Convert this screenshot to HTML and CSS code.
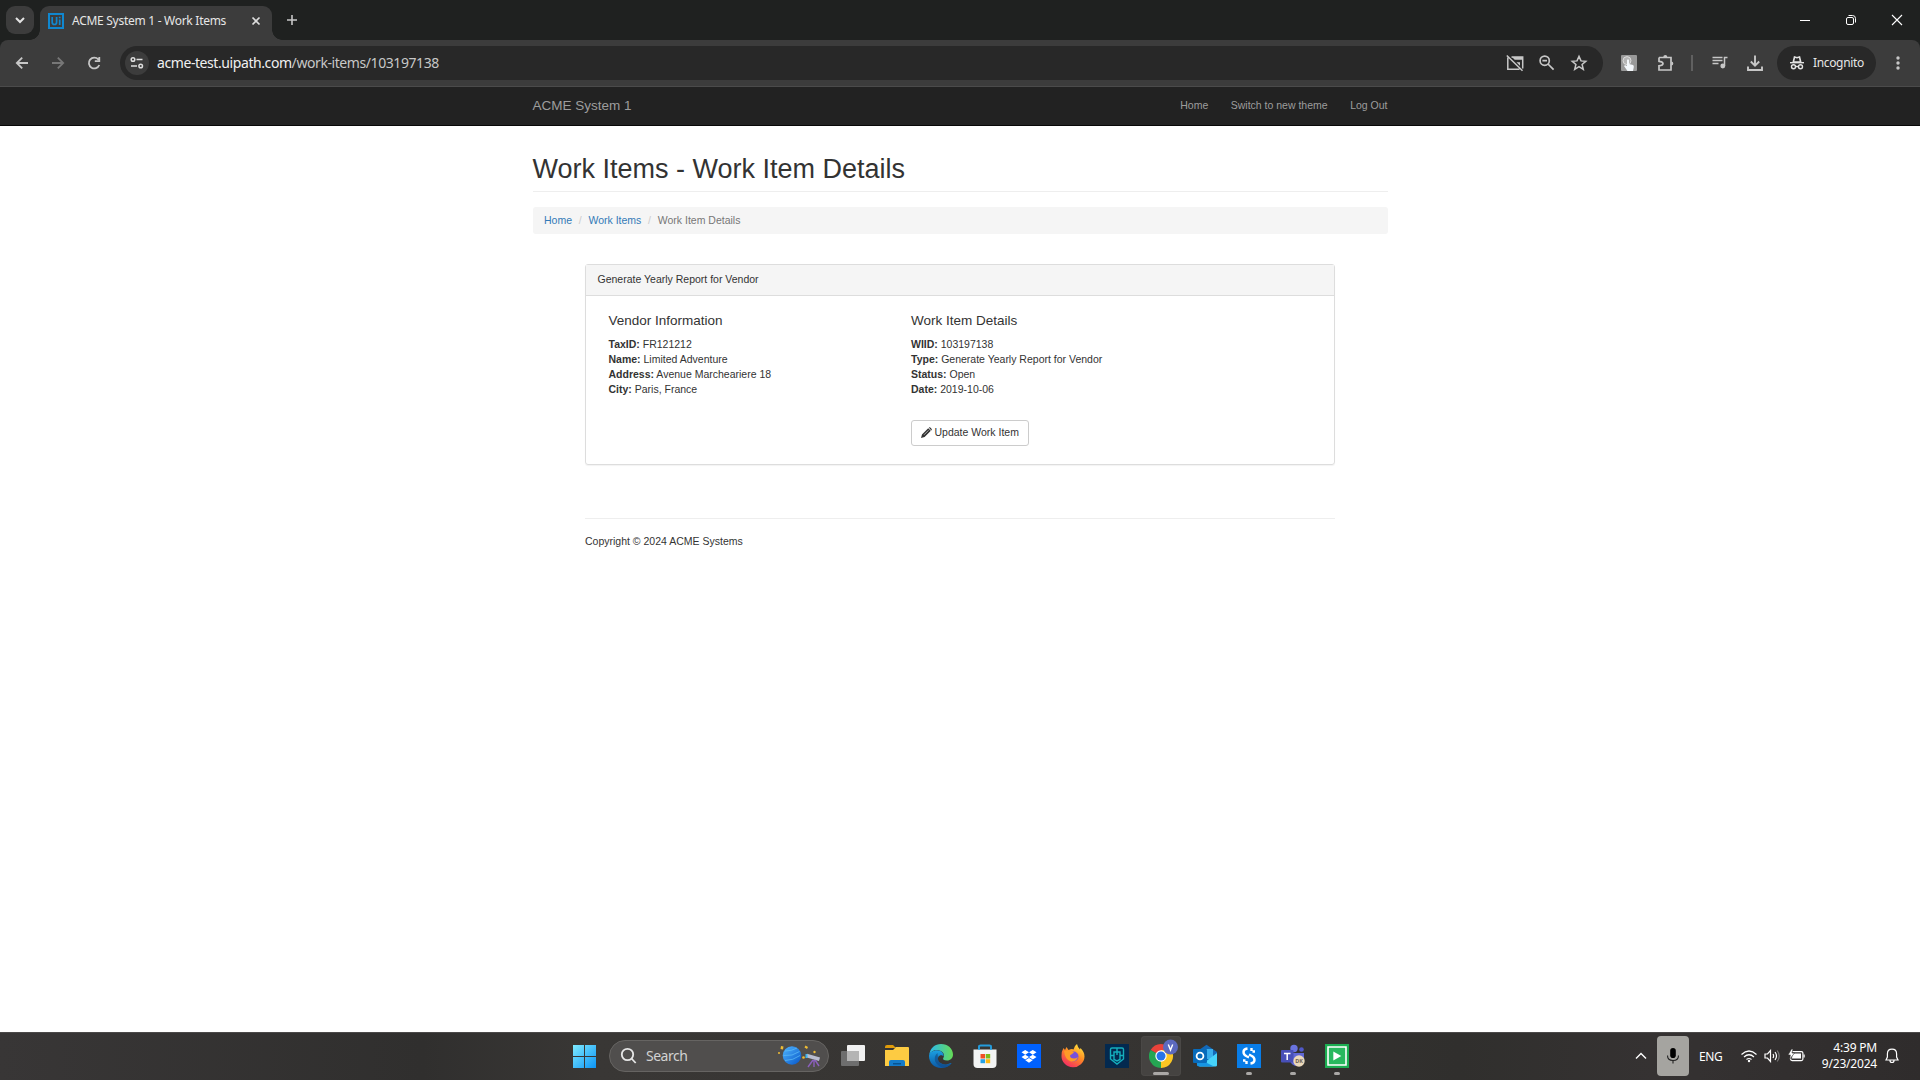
FILE: index.html
```html
<!DOCTYPE html>
<html lang="en">
<head>
<meta charset="utf-8">
<title>ACME System 1 - Work Items</title>
<link rel="stylesheet" href="styles.css">
</head>
<body>
<header class="tabstrip">
  <button class="tab-search"><svg width="28" height="28" fill="none" stroke="#e3e3e3" stroke-width="2"><path d="M10 12l4 4 4-4"/></svg></button>
  <div class="tab">
    <svg class="favicon" width="16" height="16" fill="none" stroke="#1087cf"><path d="M1 1h14v14H1z" stroke-width="2"/><path d="M4.2 4v5.2q0 2.300 2.200 2.300t2.200-2.300V4M11.700 6.500V12M11.700 3.800v1.500" stroke-width="1.700"/></svg>
    <span class="tab-title">ACME System 1 - Work Items</span>
    <svg class="tab-close" width="16" height="16" stroke="#dedede" stroke-width="1.700"><path d="M4.500 4.500l7 7M11.500 4.500l-7 7"/></svg>
  </div>
  <svg class="new-tab" width="12" height="12" stroke="#c7c7c7" stroke-width="1.600"><path d="M6 1v10M1 6h10"/></svg>
  <div class="window-controls">
    <svg width="46" height="40" stroke="#fff" stroke-width="1"><path d="M18 20.500h10"/></svg>
    <svg width="46" height="40" fill="none" stroke="#fff" stroke-width="1"><rect x="18.500" y="17.500" width="7" height="7" rx="1.500"/><path d="M20.500 15.500h4q3 0 3 3v4"/></svg>
    <svg width="46" height="40" stroke="#fff" stroke-width="1.100"><path d="M18 15l10 10M28 15L18 25"/></svg>
  </div>
</header>
<div class="toolbar-wrap">
<nav class="toolbar">
  <svg width="36" height="36" fill="none" stroke="#c7c7c7" stroke-width="1.800"><path d="M24 18H13M18.200 12.600L12.800 18l5.400 5.400"/></svg>
  <svg width="36" height="36" fill="none" stroke="#777" stroke-width="1.800"><path d="M12 18h11M17.800 12.600l5.400 5.400-5.400 5.400"/></svg>
  <svg width="36" height="36" fill="none" stroke="#c7c7c7" stroke-width="1.800"><path d="M22.300 14.400A5.400 5.400 0 1 0 23.300 20M23.300 12v4.200h-4.500"/></svg>
  <div class="omnibox">
    <span class="site-info"><svg width="24" height="24" fill="none" stroke="#dedede" stroke-width="1.500"><circle cx="8" cy="8.500" r="1.800"/><path d="M11.500 8.500h6M6 15h6"/><circle cx="15.700" cy="15" r="1.800"/></svg></span>
    <span class="url">acme-test.uipath.com<span class="url-path">/work-items/103197138</span></span>
    <span class="omni-icons">
      <svg width="20" height="20" fill="none" stroke="#c7c7c7" stroke-width="1.500"><path d="M6.500 4h11.200v11.500M14.500 16.200H2.800V4.500M1.800 2.500l15.700 15.200"/><path d="M7 4h10.500v2.800H9.700zM11.500 9.300H15v3.500z" fill="#c7c7c7" stroke="none"/></svg>
      <svg width="20" height="20" fill="none" stroke="#c7c7c7" stroke-width="1.700"><circle cx="7.700" cy="7.700" r="4.600"/><path d="M11 11l5.600 5.600M5.400 7.700H10"/></svg>
      <svg width="20" height="20" fill="none" stroke="#c7c7c7" stroke-width="1.500"><path d="M10 3.400l2 4.500 4.800.4-3.700 3.200 1.200 4.800-4.300-2.600-4.300 2.600 1.200-4.800-3.700-3.200 4.800-.4z"/></svg>
    </span>
  </div>
  <svg class="ext-icon" width="16" height="16"><rect width="16" height="16" rx="1" fill="#999"/><circle cx="6" cy="5.600" r="4" fill="#b4b4b4" stroke="#ddd"/><path d="M6 5q1-1.500 2 0v4l4 1q1 .4.800 2L12 16H6.500L3 11q1-1.500 3 0z" fill="#f3f7fb"/></svg>
  <svg class="puzzle-icon" width="20" height="20" fill="none" stroke="#c7c7c7" stroke-width="1.700"><path d="M3 4.500h12v4M15 13v4H3v-4.200q4-.2 4-2.200T3 8.300V4.500M15 8v5"/><path d="M7.300 4a2 2 0 0 1 4 0zM15.300 8.500a2 2 0 0 1 0 4z" fill="#c7c7c7" stroke="none"/></svg>
  <span class="divider"></span>
  <svg class="music-icon" width="18" height="18" fill="none" stroke="#c7c7c7" stroke-width="1.500"><path d="M1.500 3.500h10M1.500 6.500h10M1.500 9.500h6M13.500 12V3.500H16.500"/><circle cx="11.800" cy="12" r="1.700" fill="#c7c7c7"/></svg>
  <svg class="download-icon" width="18" height="18" fill="none" stroke="#c7c7c7" stroke-width="1.900"><path d="M9 1.500v9.500M4.800 7.500L9 11.700l4.200-4.200M2 12.500V16h14v-3.500"/></svg>
  <div class="incognito">
    <svg width="16" height="16" fill="none" stroke="#e3e3e3" stroke-width="1.400"><path d="M1 7.700h14"/><path d="M4.300 7L5.500 2l2.500.7 2.500-.7 1.200 5z" stroke-width="1.600"/><circle cx="4.500" cy="11.700" r="2"/><circle cx="11.500" cy="11.700" r="2"/><path d="M6.500 11.500h3"/></svg>
    <span class="incognito-label">Incognito</span>
  </div>
  <svg class="menu-icon" width="6" height="18" fill="#c7c7c7"><circle cx="3" cy="4" r="1.700"/><circle cx="3" cy="9" r="1.700"/><circle cx="3" cy="14" r="1.700"/></svg>
</nav>
</div>

<main class="page">
  <nav class="navbar">
    <div class="container navbar-inner">
      <a class="brand">ACME System 1</a>
      <div class="nav-links"><a>Home</a><a>Switch to new theme</a><a>Log Out</a></div>
    </div>
  </nav>
  <div class="container">
    <h1 class="page-header">Work Items - Work Item Details</h1>
    <ol class="breadcrumb"><li><a>Home</a></li><li><a>Work Items</a></li><li class="current">Work Item Details</li></ol>
    <div class="content">
      <section class="panel">
        <div class="panel-heading">Generate Yearly Report for Vendor</div>
        <div class="panel-body">
          <div class="col">
            <h4>Vendor Information</h4>
            <p><b>TaxID:</b> FR121212<br><b>Name:</b> Limited Adventure<br><b>Address:</b> Avenue Marcheariere 18<br><b>City:</b> Paris, France</p>
          </div>
          <div class="col">
            <h4>Work Item Details</h4>
            <p><b>WIID:</b> 103197138<br><b>Type:</b> Generate Yearly Report for Vendor<br><b>Status:</b> Open<br><b>Date:</b> 2019-10-06</p>
            <button class="btn"><svg width="11" height="11" fill="#333"><path d="M0 11l1-3.600L7.200 1.200l2.600 2.600L3.600 10zM7.800.6Q8.500-.2 9.300.5l1.200 1.200q.7.800 0 1.500l-.2.200z"/><path d="M3 7.800l4.500-4.500" stroke="#fff" stroke-width=".6"/></svg>Update Work Item</button>
          </div>
        </div>
      </section>
      <footer class="footer">Copyright © 2024 ACME Systems</footer>
    </div>
  </div>
</main>

<footer class="taskbar">
  <div class="task-apps">
    <div class="app"><svg width="23" height="23"><defs><linearGradient id="win" x1="0" y1="0" x2="23" y2="23" gradientUnits="userSpaceOnUse"><stop offset="0" stop-color="#7eeaff"/><stop offset="1" stop-color="#0c94f5"/></linearGradient></defs><path fill="url(#win)" d="M0 0h11v11H0zM12 0h11v11H12zM0 12h11v11H0zM12 12h11v11H12z"/></svg></div>
    <div class="search">
      <svg width="18" height="18" fill="none" stroke="#e6e6e6" stroke-width="1.800"><circle cx="7.500" cy="7.500" r="5.700"/><path d="M11.500 11.500l4.200 4.500"/></svg>
      <span class="search-label">Search</span>
      <svg class="search-art" width="44" height="26"><defs><linearGradient id="planet" x2="1" y2="1"><stop stop-color="#50b5ff"/><stop offset="1" stop-color="#0655c8"/></linearGradient></defs><circle cx="15" cy="12.500" r="9.300" fill="url(#planet)"/><path d="M8 8q7 0 12-3M6.500 12.500q9 1 16-4M8 17.500q8 0 15-5" stroke="#5dbdf7" fill="none" stroke-width=".9" opacity=".8"/><g fill="#efbd35"><path d="M4 3l2.500.5-.5 3-2.500-.5zM28.500 2.500l2.500 1.500-1 2-2.500-1.500z"/><circle cx="2" cy="10" r="1"/><circle cx="37.500" cy="9" r="1.200"/><circle cx="26.500" cy="14.500" r="1.300"/></g><path d="M29.500 12.500l13 3.800" stroke="#b9bdd0" stroke-width="3.800"/><path d="M29.500 11v4" stroke="#3eb4ef" stroke-width="2"/><path d="M36 17l-5 7M37 17v7M38 17l4 6" stroke="#8b60bd" stroke-width="1.400"/></svg>
    </div>
    <div class="app"><svg width="24" height="24"><rect x="6" y="1" width="18" height="16" rx="1" fill="#f1f1f1"/><rect y="7" width="18" height="15" rx="1" fill="#747474" opacity=".9"/><path d="M6 7h12v10H6z" fill="#b4b4b4"/></svg></div>
    <div class="app"><svg width="24" height="24"><path d="M0 3q0-2 2-2h6l3 3H0z" fill="#e09b0a"/><path d="M0 6h8l3-3h12q1 0 1 1v18H0z" fill="#fdcb42"/><path d="M4 22v-4q0-2 2-2h12q2 0 2 2v4z" fill="#147bc9"/><path d="M8 19h8v1.500H8z" fill="#075390"/></svg></div>
    <div class="app"><svg width="24" height="24"><defs><linearGradient id="edgeTop"><stop stop-color="#2ab7ef"/><stop offset="1" stop-color="#66dc55"/></linearGradient><linearGradient id="edgeLow" x2="0" y2="1"><stop stop-color="#1ba0e2"/><stop offset="1" stop-color="#0c59a4"/></linearGradient></defs><path d="M.3 10.500C1.300 4 6 0 12 0c7 0 12 4.800 12 10.500 0 3.500-2.500 6-6 6-3.200 0-4.500-1-3.800-2.200C17 10 12.500 6 8 6 4.500 6 1.500 8 .3 10.500z" fill="url(#edgeTop)"/><path d="M0 12C0 8.500 4 6.300 8 6.300c4.500 0 7 3 6.600 6.500-.5-1.800-4-2.200-5.300.2-2.200 4.300 4 8.500 8.700 7.200 2.200-.5 3.800-1.800 4.500-1C20 22.500 16 24 12 24 5 24 0 18.500 0 12z" fill="url(#edgeLow)"/><path d="M8.500 9C3 13.500 6 22 14.500 23.700 20 23 23 19.300 22.500 19.200c-6 3.500-13.500.3-13.500-5z" fill="#124a87" opacity=".65"/></svg></div>
    <div class="app"><svg width="24" height="24"><path d="M6 7V3q0-1.500 1.500-1.500h9Q18 1.500 18 3v4" fill="none" stroke="#249bdc" stroke-width="1.800"/><path d="M.5 5.500h23V20q0 4-4 4h-15q-4 0-4-4z" fill="#f3f4f4"/><path d="M6 1.500V6h12V1.500" fill="none" stroke="#249bdc" stroke-width="1.500" stroke-dasharray="4.500 12 4.500"/><path d="M7.500 10H12v4.500H7.500z" fill="#f04f25"/><path d="M12.700 10h4.500v4.500h-4.500z" fill="#80ba18"/><path d="M7.500 15.200H12v4H7.500z" fill="#24a1e7"/><path d="M12.700 15.200h4.500v4h-4.500z" fill="#fdb812"/></svg></div>
    <div class="app"><svg width="24" height="24"><path d="M0 0h24v24H0z" fill="#0061fe"/><path d="M8.200 6L12 8.300l-3.800 2.400-3.700-2.400zM15.800 6l3.700 2.300-3.700 2.400L12 8.300zM8.200 10.700L12 13l-3.800 2.400L4.500 13zM15.800 10.700l3.700 2.300-3.700 2.400L12 13zM12 14l3.700 2.300-3.700 2.400-3.700-2.400z" fill="#fff"/></svg></div>
    <div class="app"><svg width="24" height="24"><defs><linearGradient id="fox" x1=".8" y1="0" x2=".2" y2="1"><stop stop-color="#ffe83e"/><stop offset=".45" stop-color="#ff8a23"/><stop offset="1" stop-color="#f2246a"/></linearGradient></defs><path d="M2.500 4l1.500 2L5.500 3l2 3Q11 4.500 12.500 5.500 13 2 16 0q.5 3 3 5.500l.5-1.500C22 6.500 23.500 9 23.500 12.500A11.500 11 0 1 1 .5 12Q.5 7 2.500 4z" fill="url(#fox)"/><circle cx="12.500" cy="12.500" r="5" fill="#7950dc"/><path d="M3 7q7-2 10 1.500l-4 3q0 3 4 3 2 0 4-1.500-2 5-7 4.500Q4 16 3 7z" fill="#ff9b27"/></svg></div>
    <div class="app"><svg width="24" height="24" fill="none" stroke="#15aebd" stroke-width="1.400"><path d="M0 0h24v24H0z" fill="#03294f" stroke="none"/><path d="M7 4h10q1.500 0 1.500 1.500V15L12 20l-6.500-5V5.500Q5.500 4 7 4zM12 4v7M5.500 11.500H9V8h6v3.500h3.500M9 11.500v4l3 1.500 3-1.500v-4"/></svg></div>
    <div class="app active running"><svg class="chrome" width="30" height="30"><path d="M12 18L1.600 12A12 12 0 0 1 22.400 12z" fill="#e9423a"/><path d="M12 18L1.600 12A12 12 0 0 0 12 30l6-9z" fill="#25a553"/><path d="M12 18V12h10.400A12 12 0 0 1 12 30z" fill="#fbc723"/><circle cx="12" cy="18" r="5.700" fill="#fff"/><circle cx="12" cy="18" r="4.500" fill="#2674e9"/><circle cx="21.500" cy="9" r="7.500" fill="#5c69be"/><path d="M19.300 6.500l2.200 5.500 2.200-5.500" fill="none" stroke="#fff" stroke-width="1.400"/></svg></div>
    <div class="app"><svg width="24" height="24"><path d="M3 8L13.500.8 24 8v14H4z" fill="#1268b8"/><path d="M7 5h13v10H7z" fill="#39adeb"/><path d="M24 9v12q0 1.500-1.500 1.500H6z" fill="#46d3fa"/><path d="M4 14l17 8.500H6q-2 0-2-2z" fill="#1695e3"/><rect y="5" width="14" height="14" rx="1" fill="#086bbb"/><circle cx="7" cy="12" r="3.400" fill="none" stroke="#fff" stroke-width="1.800"/></svg></div>
    <div class="app running small"><svg width="24" height="24" fill="none" stroke="#fff" stroke-width="2.400"><path d="M0 0h24v24H0z" fill="#087de8" stroke="none"/><path d="M10.500 4.500Q6.500 5 6.500 8q0 3 3.500 4.500l2 .8M14.500 4v3M18 7.500h-2.500M12 10.500l2 1q3.500 1.500 3.500 4.500t-4 3.500M9.500 20v-3M6 16.500h2.500"/></svg></div>
    <div class="app running small"><svg width="24" height="24"><circle cx="13" cy="4.500" r="3.700" fill="#6973df"/><circle cx="20.500" cy="5.500" r="2.300" fill="#5059c9"/><path d="M9 9h14v6q0 7-7 7-5 0-7-5z" fill="#6068d5"/><rect y="6" width="12.500" height="12.500" rx="1" fill="#4850b8"/><path d="M3 9.500h6.500M6.200 9.500v6.500" stroke="#fff" stroke-width="1.500"/><circle cx="18" cy="17" r="5.700" fill="#ead8ba"/><text x="18" y="19.300" class="badge-text">DK</text></svg></div>
    <div class="app running small"><svg width="24" height="24"><path d="M0 0h24v24H0z" fill="#1bad51"/><path d="M3 3h18v18H3z" fill="#28b85e" stroke="#fff" stroke-width="1.600"/><path d="M8.300 7.500l8 4.500-8 4.500z" fill="#fff"/></svg></div>
  </div>
  <div class="tray">
    <svg width="12" height="12" fill="none" stroke="#fff" stroke-width="1.400"><path d="M1 8.500l5-5 5 5"/></svg>
    <span class="mic"><svg width="16" height="18"><rect x="5.200" y="1" width="5.600" height="10" rx="2.800"/><path d="M2.500 8.500q0 5 5.500 5t5.500-5M8 13.500v3" fill="none" stroke="#222" stroke-width="1.100"/></svg></span>
    <span class="lang">ENG</span>
    <svg class="wifi" width="18" height="14" fill="none" stroke="#fff" stroke-width="1.200"><path d="M1.500 5.500q7.500-7 15 0M4 8q5-4.500 10 0M6.500 10.500q2.500-2 5 0"/><circle cx="9" cy="12" r="1.200" fill="#fff" stroke="none"/></svg>
    <svg class="volume" width="16" height="14" fill="none" stroke="#fff" stroke-width="1.200"><path d="M1 5h2.500l3-3.500v11L3.500 9H1zM9 5q1.200 2 0 4M11 3q3 4 0 8"/><path d="M13.200 1.500q4 5.500 0 11" stroke="#777"/></svg>
    <svg class="battery" width="18" height="14"><rect x="2.600" y="2.600" width="12.300" height="9" rx="1.500" fill="none" stroke="#fff" stroke-width="1.200"/><path d="M4.500 4.500H13v5H4zM15.500 5.500h1.200v3h-1.200z" fill="#fff"/><path d="M3.500 0L0 6h2.500L1.500 10.500 6.500 4H4L5 0z" fill="#fff" stroke="#33302f" stroke-width=".6"/></svg>
    <div class="clock"><span>4:39 PM</span><span>9/23/2024</span></div>
    <svg class="bell" width="14" height="16" fill="none" stroke="#fff" stroke-width="1.200"><path d="M1 12l1.400-3V6q0-4.800 4.600-4.800T11.600 6v3l1.400 3zM5 12.500q0 2 2 2t2-2"/></svg>
  </div>
</footer>
</body>
</html>
```
FILE: styles.css
```css
* { box-sizing: border-box; }
body { margin: 0; width: 1920px; height: 1080px; overflow: hidden; display: flex; flex-direction: column; background: #fff; font-family: "Liberation Sans", Arial, sans-serif; font-size: 10.5px; line-height: 15px; color: #333; }
svg { display: block; flex: none; }
button { padding: 0; border: 0; font: inherit; color: inherit; }

/* browser chrome */
.tabstrip { height: 40px; flex: none; background: #1f2120; display: flex; align-items: center; font-family: "Noto Sans", sans-serif; }
.tab-search { width: 28px; height: 28px; margin-left: 6px; background: #3c3c3c; border-radius: 9px; }
.tab { position: relative; align-self: flex-end; width: 232px; height: 34px; margin-left: 6px; padding: 0 8px; display: flex; align-items: center; background: #3c3c3c; border-radius: 9px 9px 0 0; }
.tab::before, .tab::after { content: ""; position: absolute; bottom: 0; width: 10px; height: 10px; }
.tab::before { left: -10px; background: radial-gradient(circle at 0 0, transparent 9.5px, #3c3c3c 10px); }
.tab::after { right: -10px; background: radial-gradient(circle at 100% 0, transparent 9.5px, #3c3c3c 10px); }
.favicon { margin-top: -5px; }
.tab-title { width: 156px; margin: -6px 20px 0 8px; font-size: 12px; letter-spacing: -.28px; color: #e6e6e6; white-space: nowrap; }
.tab-close { margin-top: -5px; }
.new-tab { margin-left: 14px; }
.window-controls { display: flex; margin-left: auto; }
.toolbar-wrap { flex: none; background: #1f2120; }
.toolbar { height: 47px; padding: 0 19px 0 4px; display: flex; align-items: center; background: #3c3c3c; border-bottom: 1px solid #4b4b4b; border-radius: 8px 8px 0 0; }
.omnibox { width: 1483px; height: 34px; margin-left: 8px; display: flex; align-items: center; padding: 0 14px 0 5px; background: #282828; border-radius: 17px; font-family: "Noto Sans", sans-serif; font-size: 14px; color: #f0f0f0; }
.site-info { width: 24px; height: 24px; background: #3c3c3c; border-radius: 50%; }
.url { margin: -1px 0 0 8px; letter-spacing: -.42px; }
.url-path { color: #c7c7c7; }
.omni-icons { display: flex; gap: 12px; margin-left: auto; }
.ext-icon { margin-left: 18px; }
.puzzle-icon { margin-left: 19px; }
.divider { width: 2px; height: 16px; margin-left: 15px; background: #606060; }
.music-icon { margin-left: 18px; }
.download-icon { margin-left: 17px; }
.incognito { width: 99px; height: 34px; margin-left: 13px; padding-left: 12px; display: flex; align-items: center; gap: 8px; background: #282828; border-radius: 17px; font: 12px "Noto Sans", sans-serif; letter-spacing: -.35px; color: #e6e6e6; }
.incognito-label { margin-top: -1px; }
.menu-icon { margin-left: auto; }

/* web page */
.page { flex: 1; min-height: 0; }
.container { width: 855px; margin: 0 auto; }
.navbar { height: 39px; background: #222; border-bottom: 1px solid #080808; color: #9d9d9d; }
.navbar-inner { height: 37px; display: flex; align-items: center; justify-content: space-between; }
.brand { font-size: 13.5px; margin-top: -1px; }
.nav-links { display: flex; gap: 22.5px; }
.page-header { margin: 28px 0 15px; padding-bottom: 7px; border-bottom: 1px solid #eee; font-size: 27px; line-height: 30px; font-weight: 400; }
.breadcrumb { display: flex; margin: 0; padding: 6px 11.5px; height: 27px; list-style: none; background: #f5f5f5; border-radius: 3px; color: #777; }
.breadcrumb a { color: #337ab7; }
.breadcrumb li + li::before { content: "/"; padding: 0 6.75px; color: #ccc; }
.content { width: 750px; margin: 30px auto 0; }
.panel { height: 201px; border: 1px solid #ddd; border-radius: 3px; box-shadow: 0 1px 1px rgba(0,0,0,.05); }
.panel-heading { height: 31px; padding: 7px 11.5px; background: #f5f5f5; border-bottom: 1px solid #ddd; }
.panel-body { display: grid; grid-template-columns: 302.5px 1fr; padding: 17px 22.5px; }
h4 { margin: 0 0 9px; font-size: 13.5px; line-height: 15px; font-weight: 400; }
p { margin: 0; }
.btn { display: flex; align-items: center; gap: 2.5px; width: 118px; height: 26px; margin-top: 23px; padding: 0 0 2px 9px; background: #fff; border: 1px solid #ccc; border-radius: 3px; white-space: nowrap; }
.footer { margin-top: 53px; padding-top: 15px; border-top: 1px solid #eee; }

/* taskbar */
.taskbar { height: 48px; flex: none; display: flex; justify-content: space-between; padding: 0 0 1px 564px; background: linear-gradient(90deg, #383636, #302f2e 22%, #393735 31%, #363432 58%, #302f2d 76%, #353232 86%, #2f2c2c); border-top: 1px solid #4b4949; font-family: "Noto Sans", sans-serif; color: #fff; }
.task-apps { display: flex; align-items: center; gap: 4px; }
.app { position: relative; width: 40px; height: 40px; display: grid; place-items: center; border-radius: 4px; }
.search { width: 220px; height: 32px; margin-left: 1px; display: flex; align-items: center; padding: 0 7px 0 10px; background: #504e4d; border: 1px solid #666462; border-radius: 16px; }
.search-label { margin: -1px 0 0 8px; font-size: 14px; letter-spacing: -.5px; color: #d2d2d2; }
.search-art { margin-left: auto; }
.active { background: #454341; box-shadow: inset 0 0 0 1px #4a4846; }
.running::after { content: ""; position: absolute; left: 12px; bottom: 1px; width: 16px; height: 3px; border-radius: 2px; background: #aaa8a6; }
.small::after { left: 17px; width: 6px; }
.chrome { margin: -6px 0 0 6px; }
.badge-text { font: bold 5.5px "Noto Sans", sans-serif; text-anchor: middle; fill: #6d6252; }
.tray { display: flex; align-items: center; padding-right: 21px; }
.mic { width: 32px; height: 40px; margin-left: 10px; display: grid; place-items: center; background: #a5a4a0; border-radius: 4px; }
.lang { margin-left: 10px; font-size: 12px; letter-spacing: -.4px; width: 24px; }
.wifi { margin-left: 17px; }
.volume { margin-left: 6px; }
.battery { margin-left: 8px; }
.clock { width: 71px; display: flex; flex-direction: column; align-items: flex-end; margin-top: -1px; font-size: 12px; line-height: 16px; letter-spacing: -.2px; }
.bell { margin-left: 8px; }
```
